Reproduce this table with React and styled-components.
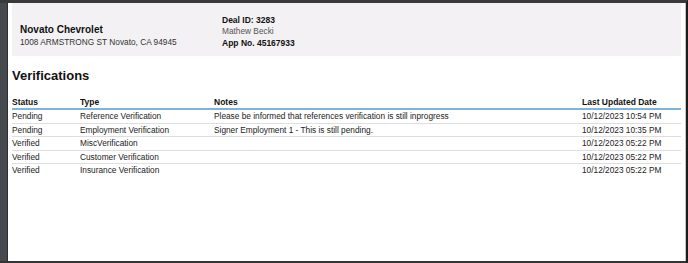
import React from "react";
import styled, { createGlobalStyle } from "styled-components";

const Global = createGlobalStyle`
  html, body { margin: 0; padding: 0; background: #fff; }
  * { box-sizing: border-box; }
  body { font-family: "Liberation Sans", Arial, sans-serif; color: #1e1e1e; }
`;

const Frame = styled.div`
  display: flex;
  width: 688px;
  height: 263px;
  background: #464a4e;
  border-top: 3px solid #3a3a3a;
  border-bottom: 2px solid #343434;
  border-right: 2px solid #1c1c1c;
  padding-left: 7px;
`;

const Sheet = styled.div`
  flex: 1;
  background: #fff;
  border-left: 1px solid #2c2f32;
  border-right: 1px solid #c6c6c6;
  padding: 0 4px 0 4px;
  display: flex;
  flex-direction: column;
`;

const InfoPanel = styled.div`
  height: 53px;
  background: #f3f1f3;
  display: grid;
  grid-template-columns: 202px 1fr;
  align-items: end;
  padding: 0 8px 7px 8px;
`;

const Dealer = styled.div`
  margin-bottom: 1px;
`;

const DealerName = styled.div`
  font-size: 10px;
  font-weight: 700;
  line-height: 12px;
  color: #111;
`;

const Line = styled.div`
  font-size: ${(p) => (p.$bold ? "8.5px" : "8.3px")};
  line-height: ${(p) => (p.$tight ? "11.5px" : "12px")};
  font-weight: ${(p) => (p.$bold ? 700 : 400)};
  color: ${(p) => p.$color || "#2a2a2a"};
  white-space: nowrap;
`;

const Deal = styled.div``;

const Heading = styled.h2`
  margin: 11.5px 0 0 0;
  font-size: 13px;
  line-height: 16px;
  font-weight: 700;
  color: #111;
`;

const Table = styled.div`
  margin-top: 12.5px;
  display: flex;
  flex-direction: column;
`;

const Row = styled.div`
  display: grid;
  grid-template-columns: 68px 134px 368px 1fr;
  font-size: ${(p) => (p.$head ? "8.5px" : "8.3px")};
  line-height: ${(p) => (p.$head ? "12px" : "12.5px")};
  font-weight: ${(p) => (p.$head ? 700 : 400)};
  color: ${(p) => (p.$head ? "#111" : "#222")};
  border-bottom: ${(p) =>
    p.$head ? "2px solid #7fb3de" : p.$last ? "1px solid transparent" : "1px solid #dedede"};
  white-space: nowrap;
`;

const Cell = styled.div`
  overflow: hidden;
`;

const rows = [
  ["Pending", "Reference Verification", "Please be informed that references verification is still inprogress", "10/12/2023 10:54 PM"],
  ["Pending", "Employment Verification", "Signer Employment 1 - This is still pending.", "10/12/2023 10:35 PM"],
  ["Verified", "MiscVerification", "", "10/12/2023 05:22 PM"],
  ["Verified", "Customer Verification", "", "10/12/2023 05:22 PM"],
  ["Verified", "Insurance Verification", "", "10/12/2023 05:22 PM"],
];

export default function App() {
  return (
    <>
      <Global />
      <Frame>
        <Sheet>
          <InfoPanel>
            <Dealer>
              <DealerName>Novato Chevrolet</DealerName>
              <Line $color="#333">1008 ARMSTRONG ST Novato, CA 94945</Line>
            </Dealer>
            <Deal>
              <Line $tight $bold $color="#111">Deal ID: 3283</Line>
              <Line $tight $color="#555">Mathew Becki</Line>
              <Line $tight $bold $color="#111">App No. 45167933</Line>
            </Deal>
          </InfoPanel>
          <Heading>Verifications</Heading>
          <Table>
            <Row $head>
              <Cell>Status</Cell>
              <Cell>Type</Cell>
              <Cell>Notes</Cell>
              <Cell>Last Updated Date</Cell>
            </Row>
            {rows.map((r, i) => (
              <Row key={i} $last={i === rows.length - 1}>
                {r.map((c, j) => (
                  <Cell key={j}>{c}</Cell>
                ))}
              </Row>
            ))}
          </Table>
        </Sheet>
      </Frame>
    </>
  );
}
